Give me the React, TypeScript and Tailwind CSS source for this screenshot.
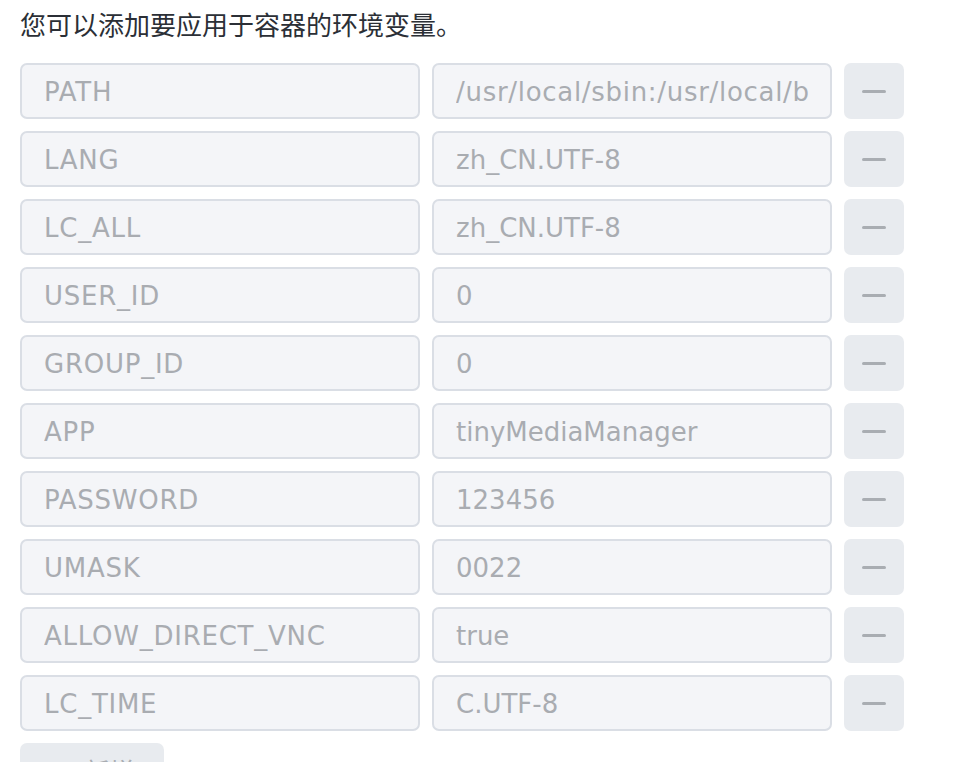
import React from "react";

const rows: [string, string][] = [
  ["PATH", "/usr/local/sbin:/usr/local/bin:/usr/sbin:/usr/bin:/sbin:/bin"],
  ["LANG", "zh_CN.UTF-8"],
  ["LC_ALL", "zh_CN.UTF-8"],
  ["USER_ID", "0"],
  ["GROUP_ID", "0"],
  ["APP", "tinyMediaManager"],
  ["PASSWORD", "123456"],
  ["UMASK", "0022"],
  ["ALLOW_DIRECT_VNC", "true"],
  ["LC_TIME", "C.UTF-8"],
];

const field =
  "w-[400px] h-[56px] shrink-0 rounded-[7px] border-2 border-[#dadee5] bg-[#f4f5f8] pl-[22px] pr-[20px] pt-[3px] flex items-center text-[26px] text-[#a9acb1]";

export default function App() {
  return (
    <div
      className="w-[974px] h-[762px] overflow-hidden bg-white pl-[20px]"
      style={{ fontFamily: '"DejaVu Sans", "Noto Sans CJK SC", sans-serif' }}
    >
      <div
        className="h-[47px] leading-[47px] text-[26px] text-[#2b2f36]"
        style={{ fontFamily: '"Noto Sans CJK SC", sans-serif' }}
      >
        您可以添加要应用于容器的环境变量。
      </div>
      <div className="mt-[16px] flex flex-col gap-[12px]">
        {rows.map(([k, v]) => (
          <div key={k} className="flex gap-[12px]">
            <div className={field + " tracking-[0.75px]"}>
              <div className="min-w-0 flex-1 overflow-hidden whitespace-nowrap">{k}</div>
            </div>
            <div className={field + (k === "PATH" ? " tracking-[0.7px] pr-[16px]" : "")}>
              <div className="min-w-0 flex-1 overflow-hidden whitespace-nowrap">{v}</div>
            </div>
            <div className="w-[60px] h-[56px] shrink-0 rounded-[7px] bg-[#e8ebef] flex items-center justify-center">
              <div className="w-[24px] h-[3px] rounded-full bg-[#a9adb2]" />
            </div>
          </div>
        ))}
        <div className="w-[144px] h-[56px] rounded-[7px] bg-[#e8ebef] flex items-center justify-center gap-[14px] text-[25.6px] text-[#a9adb2]">
          <span>+</span>
          <span style={{ fontFamily: '"Noto Sans CJK SC", sans-serif' }}>新增</span>
        </div>
      </div>
    </div>
  );
}
